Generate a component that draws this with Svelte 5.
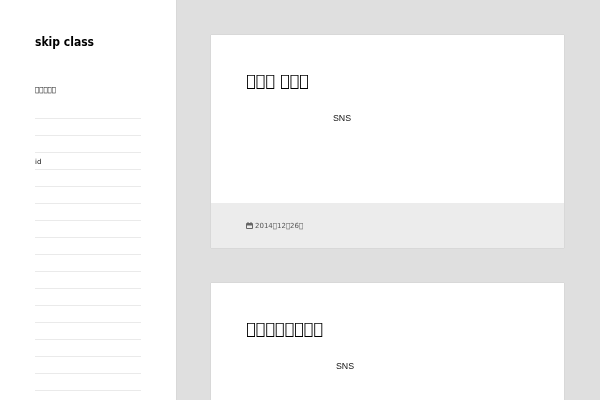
<script>
  const box = (n) => "\uE000".repeat(n);
  const links = ["", "", "", "id", "", "", "", "", "", "", "", "", "", "", "", "", ""];
  const posts = [
    { title: box(3) + " " + box(3), body: "SNS", indent: "indent-a", date: "2014" + box(1) + "12" + box(1) + "26" + box(1) },
    { title: box(8), body: "SNS", indent: "indent-b", date: "" }
  ];
</script>

<div class="page">
  <aside class="sidebar">
    <h1 class="site-title">skip class</h1>
    <p class="widget-title">{box(5)}</p>
    <ul class="links">
      {#each links as link}
        <li>{link}</li>
      {/each}
    </ul>
  </aside>
  <main class="content">
    {#each posts as post}
      <article class="card">
        <div class="card-body">
          <h2>{post.title}</h2>
          <p class={post.indent}>{post.body}</p>
        </div>
        {#if post.date}
          <footer class="card-foot">
            <svg width="7" height="7" viewBox="0 0 7 7" aria-hidden="true">
              <path d="M0.5 1.5h6v5h-6z" fill="none" stroke="#666" stroke-width="1" />
              <path d="M1 2h5v1.5h-5z" fill="#666" />
              <path d="M2 0v1.5M5 0v1.5" stroke="#666" stroke-width="1" />
            </svg>
            <span>{post.date}</span>
          </footer>
        {/if}
      </article>
    {/each}
  </main>
</div>

<style>
  :global(body) {
    margin: 0;
    overflow: hidden;
    background: #dfdfdf;
  }
  .page {
    display: flex;
    height: 400px;
    overflow: hidden;
    font-family: "DejaVu Sans", sans-serif;
    color: #333;
  }
  .sidebar {
    width: 176px;
    flex: none;
    background: #fff;
    border-right: 1px solid #d8d8d8;
  }
  .site-title {
    margin: 34px 35px 0;
    font-family: "DejaVu Sans Condensed", "DejaVu Sans", sans-serif;
    font-size: 12px;
    line-height: 16px;
    font-weight: 700;
    color: #000;
    will-change: opacity;
  }
  .widget-title {
    margin: 32px 35px 0;
    font-size: 7px;
    line-height: 16px;
    color: #111;
    will-change: opacity;
  }
  .links {
    list-style: none;
    margin: 4px 35px 0;
    padding: 0;
    width: 106px;
    will-change: opacity;
  }
  .links li {
    height: 16px;
    border-bottom: 1px solid #eaeaea;
    font-size: 7px;
    line-height: 18px;
    color: #111;
  }
  .content {
    flex: 1;
    padding: 35px 36px 0 34px;
  }
  .card {
    background: #fff;
    box-shadow: 0 0 1px rgba(0, 0, 0, 0.2);
    margin-bottom: 35px;
    will-change: opacity;
  }
  .card-body {
    height: 168px;
    padding: 0 35px;
    overflow: hidden;
  }
  h2 {
    margin: 34px 0 0;
    font-size: 16px;
    line-height: 24px;
    font-weight: 400;
    color: #000;
  }
  .card-body p {
    margin: 19px 0 0;
    font-family: "Liberation Sans", sans-serif;
    font-size: 8.8px;
    line-height: 12px;
    color: #111;
  }
  .indent-a { padding-left: 87px; }
  .indent-b { padding-left: 90px; }
  .card-foot {
    display: flex;
    align-items: center;
    gap: 2px;
    height: 45px;
    padding: 0 35px;
    background: #ececec;
    font-size: 7px;
    color: #555;
  }
</style>
